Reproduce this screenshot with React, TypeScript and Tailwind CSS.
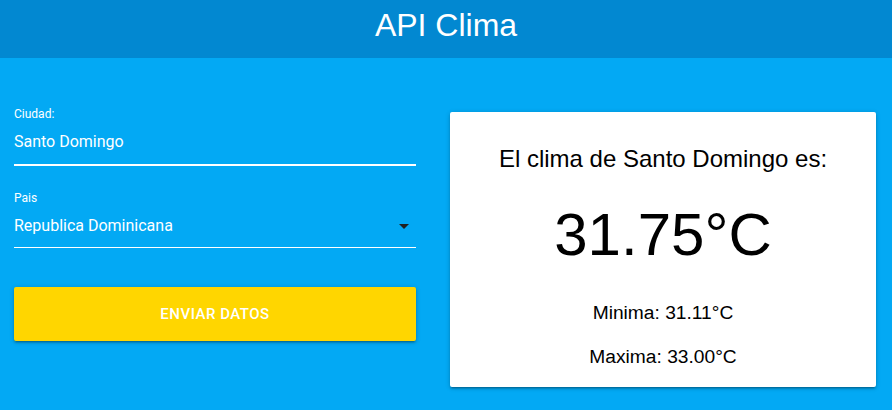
export default function App() {
  return (
    <div className="min-h-[410px] w-[892px] bg-[#03a9f4]">
      <header className="h-[58px] bg-[#0288d1] pt-[7px] text-center">
        <h1 className="text-[32px] leading-[36px] text-white font-['Liberation_Sans',Arial,sans-serif]">
          API Clima
        </h1>
      </header>

      <main className="flex items-start gap-[34px] pl-[14px] pr-[16px] pt-[48px]">
        <form className="flex w-[402px] flex-col font-['Roboto',sans-serif] text-white">
          <label className="text-[12px] leading-[16px]">Ciudad:</label>
          <div className="mt-[8px] h-[36px] border-b-2 border-white pb-[10px]">
            <span className="block text-[16px] leading-[24px]">Santo Domingo</span>
          </div>

          <label className="mt-[24px] text-[12px] leading-[16px]">Pais</label>
          <div className="mt-[8px] flex h-[34px] items-start justify-between border-b border-white">
            <span className="block text-[16px] leading-[24px]">Republica Dominicana</span>
            <svg viewBox="0 0 24 24" className="h-[24px] w-[24px] fill-[#212121]">
              <path d="M7 10l5 5 5-5z" />
            </svg>
          </div>

          <button
            type="button"
            className="mt-[39px] h-[54px] rounded-[2px] bg-[#ffd600] text-[15px] font-medium tracking-[0.5px] text-white shadow-[0_2px_2px_0_rgba(0,0,0,0.14),0_3px_1px_-2px_rgba(0,0,0,0.12),0_1px_5px_0_rgba(0,0,0,0.2)]"
          >
            ENVIAR DATOS
          </button>
        </form>

        <section className="mt-[6px] flex h-[275px] w-[426px] flex-col items-center rounded-[2px] bg-white pt-[33px] text-black font-['Liberation_Sans',Arial,sans-serif] shadow-[0_2px_2px_0_rgba(0,0,0,0.14),0_3px_1px_-2px_rgba(0,0,0,0.12),0_1px_5px_0_rgba(0,0,0,0.2)]">
          <p className="text-[24px] leading-[28px]">El clima de Santo Domingo es:</p>
          <p className="mt-[32px] text-[60px] leading-[60px]">31.75°C</p>
          <p className="mt-[36px] text-[19.2px] leading-[24px]">Minima: 31.11°C</p>
          <p className="mt-[20px] text-[19.2px] leading-[24px]">Maxima: 33.00°C</p>
        </section>
      </main>
    </div>
  );
}
